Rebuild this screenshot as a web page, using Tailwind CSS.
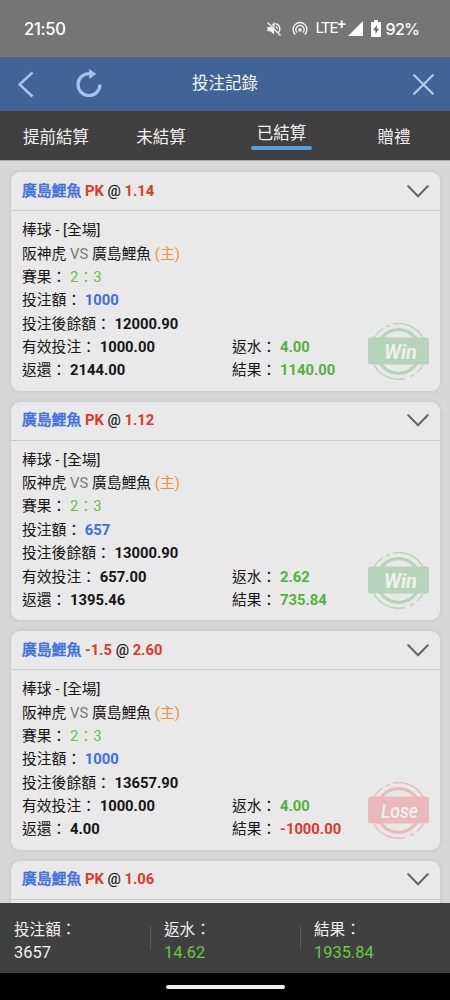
<!DOCTYPE html>
<html lang="zh-Hant">
<head>
<meta charset="utf-8">
<title>投注記錄</title>
<script src="https://cdn.jsdelivr.net/npm/@tailwindcss/browser@4"></script>
</head>
<body class="flex h-[1000px] w-[450px] flex-col overflow-hidden bg-[#d7d7d7] font-['Roboto','Noto_Sans_CJK_TC',sans-serif] text-[14.8px] text-[#161616]">
<div class="flex h-[57px] shrink-0 items-center bg-[#757575] pr-8 pl-6 font-['Inter','Roboto',sans-serif] text-white">
  <span class="text-[16.6px] leading-5 font-medium tracking-[-0.3px]">21:50</span>
  <svg class="ml-auto h-4 w-4" viewBox="0 0 16 16" fill="none" stroke="#f1f1f1" stroke-width="1.4"><path d="M1.500 1.500l13 13"/><path d="M1.500 6v4.200h2.800L8 13.600V8.500L5.500 6z" fill="#f1f1f1" stroke="none"/><path d="M6.200 4.200L8 2.600v4M10 5.500c.8.5 1.300 1.300 1.300 2.400M9.500 2.500c2.700.8 4.300 3 4.300 5.500 0 1.300-.4 2.400-1 3.300"/></svg>
  <svg class="ml-[10px] h-4 w-4" viewBox="0 0 16 16" fill="none" stroke="#f1f1f1" stroke-width="1.400"><path d="M3.300 13.500A6.900 6.900 0 1 1 12.700 13.500M5 11.400a4.100 4.100 0 1 1 6 0"/><circle cx="8" cy="9" r="1.800" fill="#f1f1f1" stroke="none"/></svg>
  <span class="ml-[8px] w-[31px] font-['Roboto',sans-serif] text-[15.500px] tracking-[-0.8px] whitespace-nowrap">LTE<span class="relative -top-[4px] text-[15px] font-medium">+</span></span>
  <svg class="ml-[1px] h-[15px] w-[15px]" viewBox="0 0 15 15"><path d="M15 0v15H0z" fill="#fff"/></svg>
  <svg class="ml-2 h-[17px] w-[10px]" viewBox="0 0 10 17"><path d="M3 0h4v2h2q1 0 1 1v13q0 1-1 1H1q-1 0-1-1V3q0-1 1-1h2z" fill="#fff"/><path d="M6 5L2 10.300h2.500V14L8 8.700H5.700z" fill="#666"/></svg>
  <span class="ml-[5px] w-[32.500px] text-[16px] leading-5 font-medium tracking-[-0.7px] whitespace-nowrap">92%</span>
</div>
<header class="flex h-[54px] shrink-0 items-center bg-[#406496] pr-4 pl-[18px]">
  <svg class="h-[27px] w-4" viewBox="0 0 16 27" fill="none" stroke="#a6c4e9" stroke-width="2.500"><path d="M14.500 1.500L1.500 13.500l13 12"/></svg>
  <svg class="relative -top-px ml-[42px] h-7 w-[26px]" viewBox="0 0 26 28" fill="none" stroke="#a6c4e9" stroke-width="3.200"><path d="M24 15.500A11 11 0 1 1 14.500 4.700"/><path d="M13.200 0l7 5-7 5z" fill="#a6c4e9" stroke="none"/></svg>
  <h1 class="ml-[90px] pt-px text-[16.5px] text-[#f3f6fa]">投注記錄</h1>
  <svg class="ml-auto h-[21px] w-[21px]" viewBox="0 0 21 21" fill="none" stroke="#b4cbe8" stroke-width="2.200" stroke-linecap="round"><path d="M1.200 1.200l18.600 18.600M19.800 1.200L1.200 19.800"/></svg>
</header>
<nav class="flex h-[49px] shrink-0 items-start bg-[#404040] pt-[11px] text-center text-[16.5px] leading-6 text-[#f1f1f1]">
  <div class="w-[112px] pt-[4px]">提前結算</div>
  <div class="w-[98px] pt-[4px]">未結算</div>
  <div class="flex w-[143px] flex-col items-center"><span>已結算</span><span class="h-[4px] w-[61px] rounded-full bg-[#5a9ddc]"></span></div>
  <div class="w-[81px] pt-[4px] pl-px">贈禮</div>
</nav>
<main id="bets" class="flex min-h-0 flex-1 flex-col gap-[11px] overflow-hidden border-t border-[#aaa] px-[11px] pt-[11px] pr-[10px]"></main>
<footer class="flex h-[70px] shrink-0 items-center bg-[#404040] text-[#f1f1f1]">
  <div class="w-[150px] pt-[7px] pl-[14px]"><div class="text-[15.600px] leading-[23px]">投注額：</div><div class="text-[16.4px] leading-[22px]">3657</div></div>
  <div class="h-6 w-px bg-[#5c5c5c]"></div>
  <div class="w-[149px] pt-[7px] pl-[13px]"><div class="text-[15.600px] leading-[23px]">返水：</div><div class="text-[16.4px] leading-[22px] text-[#66cc43]">14.62</div></div>
  <div class="h-6 w-px bg-[#5c5c5c]"></div>
  <div class="pt-[7px] pl-[13px]"><div class="text-[15.600px] leading-[23px]">結果：</div><div class="text-[16.4px] leading-[22px] text-[#66cc43]">1935.84</div></div>
</footer>
<div class="flex h-[27px] shrink-0 justify-center bg-black pt-[12px]"><div class="h-[4px] w-[119px] rounded-full bg-[#ececec]"></div></div>
<script>
const bets = [
  ['PK', '1.14', '1000', '12000.90', '1000.00', '2144.00', '4.00', '1140.00', true],
  ['PK', '1.12', '657', '13000.90', '657.00', '1395.46', '2.62', '735.84', true],
  ['-1.5', '2.60', '1000', '13657.90', '1000.00', '4.00', '4.00', '-1000.00', false],
  ['PK', '1.06', '', '', '', '', '', '', true]
];
document.getElementById('bets').innerHTML = bets.map(([line, odds, stake, balance, valid, back, rebate, result, win]) => `
<article class="relative h-[218.500px] shrink-0 rounded-[9px] bg-[#e9e9e9] shadow-[0_0_4px_rgba(0,0,0,0.10)]">
  <div class="flex h-[39px] items-center border-b border-[#cbcbcb] pr-[11px] pl-[11px]">
    <div class="pb-[1px] leading-6"><span class="text-[#3e70e2] [-webkit-text-stroke:0.6px_#3e70e2]">廣島鯉魚</span> <b class="text-[#df392e]">${line}</b> <span class="[-webkit-text-stroke:0.2px_#161616]">@</span> <b class="text-[#df392e]">${odds}</b></div>
    <svg class="ml-auto h-[13px] w-[22px]" viewBox="0 0 22 13" fill="none" stroke="#666" stroke-width="2.100" stroke-linecap="round"><path d="M1.300 1.300L11 11.200l9.700-9.900"/></svg>
  </div>
  ${stake && `
  <div class="px-[11px] pt-[8.300px] leading-[23.350px]">
    <div>棒球 - [全場]</div>
    <div>阪神虎 <span class="text-[#777]">VS</span> 廣島鯉魚 <span class="text-[#e79343]">(主)</span></div>
    <div>賽果： <span class="text-[#68bd52]">2：3</span></div>
    <div>投注額： <b class="text-[#3e70e2]">${stake}</b></div>
    <div>投注後餘額： <b>${balance}</b></div>
    <div class="flex"><div class="w-[210px]">有效投注： <b>${valid}</b></div><div>返水： <b class="text-[#55b13d]">${rebate}</b></div></div>
    <div class="flex"><div class="w-[210px]">返還： <b>${back}</b></div><div>結果： <b class="${win ? 'text-[#55b13d]' : 'text-[#df392e]'}">${result}</b></div></div>
  </div>
  <svg class="absolute right-[11px] bottom-[11px] h-[57px] w-[61px] ${win ? 'text-[#b5d4b9]' : 'text-[#e9b9bc]'}" viewBox="0 0 61 57" fill="none" stroke="currentColor">
    <circle cx="30.500" cy="28.500" r="21.800" stroke-width="3.200"/>
    <path d="M25 1.200A27.700 27.700 0 0 1 55 15M18 3.800l4-1.500M6 15a28 28 0 0 1 9-9.500M6 42a28 28 0 0 0 31 13.500M42 53.700l4-2M49 49.500a28 28 0 0 0 6-7.500" stroke-width="1.400"/>
    <rect y="14.500" width="61" height="27" rx="2.500" fill="currentColor" stroke="none"/>
    <text x="${win ? 32.500 : 31.500}" y="${win ? 36 : 35.500}" text-anchor="middle" class="${win ? 'text-[21px] font-bold' : 'text-[20px] font-medium'} font-['Roboto',sans-serif] italic" textLength="${win ? 33 : 37}" lengthAdjust="spacingAndGlyphs" fill="#edf1ed" stroke="none">${win ? 'Win' : 'Lose'}</text>
  </svg>` }
</article>`).join('');
</script>
</body>
</html>
